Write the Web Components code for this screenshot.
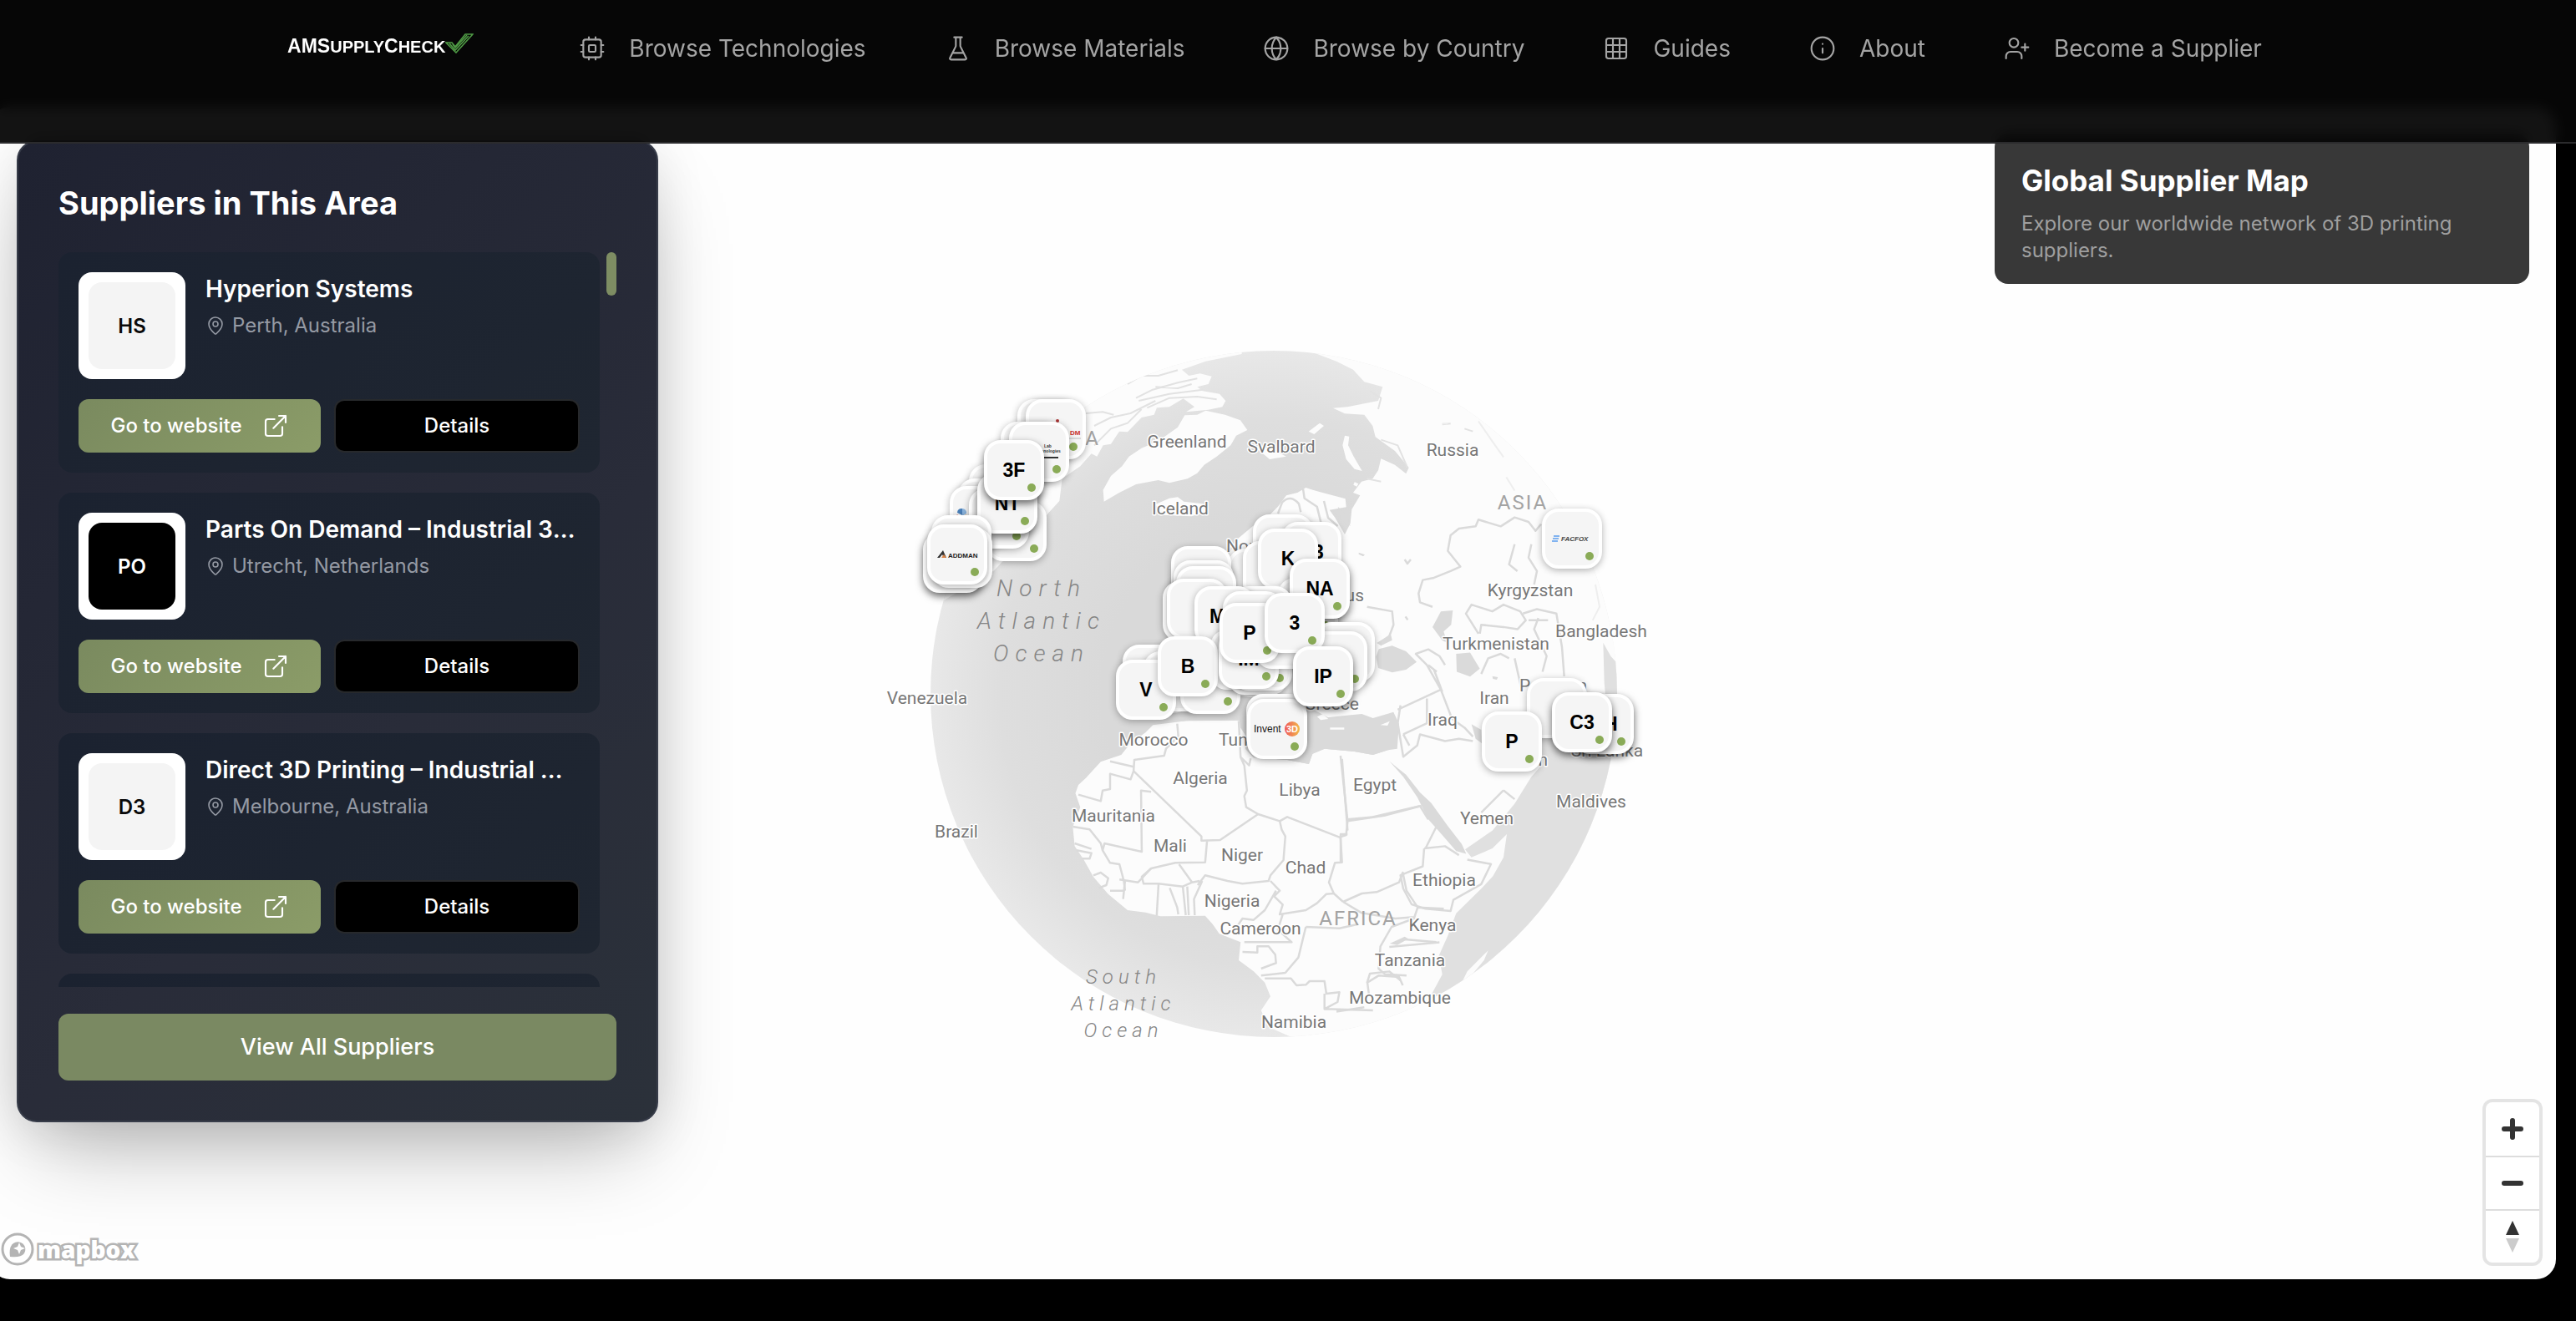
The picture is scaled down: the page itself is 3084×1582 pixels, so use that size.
<!DOCTYPE html>
<html lang="en">
<head>
<meta charset="utf-8">
<title>AMSupplyCheck – Global Supplier Map</title>
<style>
  html, body { margin: 0; height: 100%; background: #000; }
  body { display: flex; flex-direction: column; font-family: Inter, "Liberation Sans", sans-serif; overflow: hidden; }
</style>
</head>
<body>
<app-header></app-header>
<map-stage>
  <supplier-panel slot="left">
    <supplier-card name="Hyperion Systems" place="Perth, Australia" initials="HS"></supplier-card>
    <supplier-card name="Parts On Demand – Industrial 3D Printing" place="Utrecht, Netherlands" initials="PO" dark></supplier-card>
    <supplier-card name="Direct 3D Printing – Industrial Manufacturing" place="Melbourne, Australia" initials="D3"></supplier-card>
    <supplier-card></supplier-card>
  </supplier-panel>
  <info-card slot="right">
    <span slot="title">Global Supplier Map</span>
    Explore our worldwide network of 3D printing suppliers.
  </info-card>
  <map-controls slot="controls"></map-controls>
</map-stage>

<script>
const define = (name, html, after) => {
  const tpl = document.createElement('template');
  tpl.innerHTML = html;
  customElements.define(name, class extends HTMLElement {
    connectedCallback() {
      if (this.shadowRoot) return;
      this.attachShadow({ mode: 'open' }).append(tpl.content.cloneNode(true));
      if (after) after(this, this.shadowRoot);
    }
  });
};

/* ---------- icons ---------- */
const ICONS = {
  cpu: '<rect x="4" y="4" width="16" height="16" rx="2"/><rect x="9" y="9" width="6" height="6" rx="1"/><path d="M15 2v2M15 20v2M2 15h2M2 9h2M20 15h2M20 9h2M9 2v2M9 20v2"/>',
  flask: '<path d="M10 2v7.500a2 2 0 0 1-.2.9L4.700 20.550a1 1 0 0 0 .9 1.450h12.800a1 1 0 0 0 .9-1.450L14.200 10.400a2 2 0 0 1-.2-.9V2M8.500 2h7M7 16h10"/>',
  globe: '<circle cx="12" cy="12" r="10"/><path d="M12 2a14.500 14.500 0 0 0 0 20 14.500 14.500 0 0 0 0-20M2 12h20"/>',
  grid: '<rect x="3" y="3" width="18" height="18" rx="2"/><path d="M3 9h18M3 15h18M9 3v18M15 3v18"/>',
  info: '<circle cx="12" cy="12" r="10"/><path d="M12 16v-4M12 8h.01"/>',
  user: '<circle cx="9" cy="7" r="4"/><path d="M16 21v-2a4 4 0 0 0-4-4H6a4 4 0 0 0-4 4v2M19 8v6M22 11h-6"/>',
  pin: '<path d="M20 10c0 5-5.500 10.200-7.400 11.800a1 1 0 0 1-1.200 0C9.500 20.200 4 15 4 10a8 8 0 0 1 16 0"/><circle cx="12" cy="10" r="3"/>',
  external: '<path d="M15 3h6v6M10 14 21 3M18 13v6a2 2 0 0 1-2 2H5a2 2 0 0 1-2-2V8a2 2 0 0 1 2-2h6"/>'
};
define('ui-icon', `<style>
  :host { display: block; flex: none; width: var(--size, 32px); height: var(--size, 32px); }
  svg { display: block; width: 100%; height: 100%; fill: none; stroke: currentColor; stroke-width: 1.6; stroke-linecap: round; stroke-linejoin: round; }
</style><svg viewBox="0 0 24 24" aria-hidden="true"></svg>`,
  (el, root) => { root.querySelector('svg').innerHTML = ICONS[el.getAttribute('name')]; });

/* ---------- header ---------- */
define('nav-item', `<style>
  :host { display: block; }
  a { display: flex; align-items: center; gap: 28px; color: #a4a4a4; text-decoration: none; font-size: 28px; line-height: 40px; font-weight: 400; white-space: nowrap; }
</style><a href="#"><slot></slot></a>`,
  (el, root) => {
    const icon = document.createElement('ui-icon');
    icon.setAttribute('name', el.getAttribute('icon'));
    root.querySelector('a').prepend(icon);
  });

define('brand-logo', `<style>
  :host { display: block; padding-top: 2px; }
  a { display: flex; align-items: flex-end; color: #fff; text-decoration: none; font: bold 20px/24px "Liberation Sans", Arial, sans-serif; white-space: nowrap; }
  b, i { font-style: normal; font-size: 23px; }
  svg { width: 34px; height: 24px; margin-bottom: 4px; }
</style><a href="#"><span><b>AM</b><i>S</i>UPPLY<i>C</i>HECK</span>
<svg viewBox="0 0 34 24" fill="none" stroke="#4f9a45" stroke-width="1.6" aria-hidden="true">
<path d="M1 11h7l4 5L24 1h9L13 23z"/><path d="M5 12l7 8L28 3"/><path d="M9 13l3 4L26 2"/></svg></a>`);

define('app-header', `<style>
  :host { display: block; position: relative; z-index: 5; flex: none; margin-bottom: -44px; }
  header { box-sizing: border-box; height: 172px; padding: 38px 32px 0 0; border-bottom: 2px solid #2b2b2d; background: rgba(6,6,6,.95); backdrop-filter: blur(8px); display: flex; justify-content: center; align-items: flex-start; gap: 126px; }
  nav { display: flex; gap: 94px; }
</style><header>
<brand-logo></brand-logo>
<nav aria-label="Main">
<nav-item icon="cpu">Browse Technologies</nav-item>
<nav-item icon="flask">Browse Materials</nav-item>
<nav-item icon="globe">Browse by Country</nav-item>
<nav-item icon="grid">Guides</nav-item>
<nav-item icon="info">About</nav-item>
<nav-item icon="user">Become a Supplier</nav-item>
</nav></header>`);

/* ---------- supplier list ---------- */
define('supplier-card', `<style>
  :host { display: block; flex: none; box-sizing: border-box; height: 264px; padding: 24px; border-radius: 16px; background: linear-gradient(135deg, #1b2230, #1f2631); color: #fff; }
  .top { display: flex; gap: 24px; }
  .logo { box-sizing: border-box; width: 128px; height: 128px; padding: 12px; border-radius: 16px; background: #fff; flex: none; }
  .logo span { display: flex; height: 100%; align-items: center; justify-content: center; border-radius: 16px; background: #f4f4f4; color: #0a0a0a; font-size: 24px; font-weight: 600; }
  :host([dark]) .logo span { background: #000; color: #fff; }
  .text { min-width: 0; }
  h3 { margin: 0; font-size: 28px; line-height: 40px; font-weight: 600; white-space: nowrap; overflow: hidden; text-overflow: ellipsis; }
  p { display: flex; align-items: center; gap: 8px; margin: 4px 0 0; font-size: 24px; line-height: 40px; color: #959aa4; --size: 24px; }
  .actions { display: flex; gap: 16px; margin-top: 24px; }
  a, button { box-sizing: border-box; flex: 1 1 0; height: 64px; border-radius: 12px; display: flex; align-items: center; justify-content: center; gap: 24px; font: 500 24px/32px Inter, sans-serif; color: #fff; text-decoration: none; }
  a { background: linear-gradient(135deg, #7a8a5f, #8b9c68); }
  button { background: #000; border: 2px solid #27292c; padding: 0; }
</style>
<div class="top"><div class="logo"><span></span></div><div class="text"><h3></h3><p><ui-icon name="pin"></ui-icon><span></span></p></div></div>
<div class="actions"><a href="#">Go to website<ui-icon name="external"></ui-icon></a><button type="button">Details</button></div>`,
  (el, root) => {
    if (!el.hasAttribute('name')) { root.querySelectorAll('div').forEach(d => d.remove()); return; }
    root.querySelector('.logo span').textContent = el.getAttribute('initials');
    root.querySelector('h3').textContent = el.getAttribute('name');
    root.querySelector('p span').textContent = el.getAttribute('place');
  });

define('supplier-panel', `<style>
  :host { display: block; }
  section { box-sizing: border-box; width: 768px; padding: 48px; display: flex; flex-direction: column; gap: 32px; border: 2px solid #373c49; border-radius: 24px; background: linear-gradient(135deg, #1f2231, #292c39 60%, #2b313a); box-shadow: 0 50px 100px -24px rgba(0,0,0,.28), 0 10px 60px rgba(0,0,0,.1); }
  h2 { margin: 0; color: #fff; font-size: 38px; line-height: 50px; padding-bottom: 2px; font-weight: 700; white-space: nowrap; }
  .scroll { display: flex; gap: 8px; }
  .list { flex: 1; min-width: 0; height: 880px; overflow: hidden; display: flex; flex-direction: column; gap: 24px; }
  .thumb { width: 12px; height: 52px; border-radius: 6px; background: #7e8d63; }
  button { height: 80px; border: 0; border-radius: 12px; background: #7a8962; color: #fff; font: 500 27px/40px Inter, sans-serif; }
</style><section><h2>Suppliers in This Area</h2>
<div class="scroll"><div class="list"><slot></slot></div><div class="thumb"></div></div>
<button type="button">View All Suppliers</button></section>`);

define('info-card', `<style>
  :host { display: block; }
  section { box-sizing: border-box; width: 640px; padding: 28px 32px 24px; border-radius: 16px; background: #383838; }
  h2 { margin: 0 0 8px; color: #fff; font-size: 35px; line-height: 56px; font-weight: 700; }
  p { margin: 0; color: #9f9f9f; font-size: 24px; line-height: 32px; }
</style><section><h2><slot name="title"></slot></h2><p><slot></slot></p></section>`);

define('map-controls', `<style>
  :host { display: block; }
  div { width: 64px; border-radius: 8px; background: #fff; box-shadow: 0 0 0 4px rgba(0,0,0,.1); }
  button { display: flex; align-items: center; justify-content: center; width: 64px; height: 64px; padding: 0; border: 0; background: none; }
  button + button { border-top: 2px solid #ddd; }
  svg { width: 40px; height: 40px; }
</style><div>
<button type="button" aria-label="Zoom in"><svg viewBox="0 0 40 40"><path d="M20 10v20M10 20h20" stroke="#333" stroke-width="6" stroke-linecap="round"/></svg></button>
<button type="button" aria-label="Zoom out"><svg viewBox="0 0 40 40"><path d="M10 20h20" stroke="#333" stroke-width="6" stroke-linecap="round"/></svg></button>
<button type="button" aria-label="Reset bearing to north"><svg viewBox="0 0 40 40"><path d="M12 18 20 1l8 17z" fill="#333"/><path d="M12 22l8 17 8-17z" fill="#ccc"/></svg></button>
</div>`);

/* ---------- pins ---------- */
define('map-pin', `<style>
  :host { display: block; position: absolute; }
  button { box-sizing: border-box; position: relative; display: flex; align-items: center; justify-content: center; width: 72px; height: 72px; padding: 0; border: 4px solid #fff; border-radius: 20px; background: #f5f5f5; box-shadow: 0 2px 8px rgba(0,0,0,.3); color: #000; font: bold 23px/24px "Liberation Sans", Arial, sans-serif; white-space: nowrap; }
  :host([strong]) button { box-shadow: 0 4px 10px rgba(0,0,0,.6); }
  i { position: absolute; right: 6px; bottom: 6px; width: 10px; height: 10px; border-radius: 5px; background: #8aab57; }
</style><button type="button"><slot></slot><i></i></button>`);

/* ---------- globe ---------- */
const LABELS = [
  ['Greenland',1421,536],['Svalbard',1534,542],['Iceland',1413,616],['Russia',1739,546],['Norway',1468,661,'start'],
  ['Belarus',1633,720,'end'],['Kyrgyzstan',1832,714],['Turkmenistan',1791,778],['Bangladesh',1917,763],['Iran',1789,843],
  ['Iraq',1727,869],['Pakistan',1819,828,'start'],['Yemen',1780,987],['Maldives',1905,967],['Sri Lanka',1924,906],
  ['Oman',1853,917,'end'],['Greece',1594,850],['Morocco',1381,893],['Tunisia',1459,893,'start'],['Algeria',1437,939],
  ['Libya',1556,953],['Egypt',1646,947],['Mauritania',1333,984],['Mali',1401,1020],['Niger',1487,1031],['Chad',1563,1046],
  ['Nigeria',1475,1086],['Cameroon',1509,1119],['Ethiopia',1729,1061],['Kenya',1715,1115],['Tanzania',1688,1157],
  ['Mozambique',1676,1202],['Namibia',1549,1231],['Venezuela',1110,843],['Brazil',1145,1003]
];
const ADDMAN = '<svg width="50" height="12" viewBox="0 0 50 12"><path d="M1 10 8 1l4 9H9L7 6l-3 4z" fill="#333"/><path d="M6 10l3-4 3 4z" fill="#d98246"/><text x="14" y="10" font-size="8" font-weight="bold" fill="#222">ADDMAN</text></svg>';
const FACFOX = '<svg width="50" height="10" viewBox="0 0 50 10"><path d="M3 2h7M2 5h7M1 8h7" stroke="#5b9dee" stroke-width="1.500"/><text x="12" y="8" font-size="8" font-style="italic" font-weight="bold" fill="#444">FACFOX</text></svg>';
const INVENT = '<svg width="56" height="20" viewBox="0 0 56 20"><defs><linearGradient id="iv"><stop stop-color="#ef5a5a"/><stop offset="1" stop-color="#f2b84b"/></linearGradient></defs><text x="0" y="14" font-size="12" font-weight="normal" fill="#111">Invent</text><circle cx="46" cy="10" r="9" fill="url(#iv)"/><text x="39" y="14" font-size="11" fill="#fff">3D</text></svg>';
const BLOB = '<svg width="62" height="20" viewBox="0 0 62 20"><path d="M4 6a5 5 0 0 1 6-5v8z" fill="#4a7fb8"/><path d="M10 1a5 5 0 0 1 5 6l-5 3z" fill="#8bb4dd"/><path d="M3 8l7 3v4z" fill="#d9534f"/><path d="M10 11l5-3-3 7z" fill="#e39a3b"/><path d="M8 14h4l-2 3z" fill="#5ca45c"/></svg>';
const DM = '<svg width="64" height="30" viewBox="0 0 64 30"><circle cx="34" cy="5" r="2" fill="#a33"/><text x="49" y="22" font-size="8" fill="#c9302c">DM</text><path d="M48 26h14" stroke="#bbb"/></svg>';
const LAB = '<svg width="64" height="28" viewBox="0 0 64 28"><g font-size="5" fill="#333"><text x="38" y="9">Lab</text><text x="26" y="15">Technologies</text></g><path d="M38 21h17" stroke="#333" stroke-width="2"/></svg>';
const PINS = [
  [1218,478,''],[1228,478,DM],[1198,505,''],[1208,505,LAB],[1160,556,''],[1147,573,''],[1181,600,''],[1137,582,BLOB],
  [1160,585,''],[1170,567,'NT',1],[1178,527,'3F',1],[1115,617,''],[1105,638,'',1],[1116,632,''],[1110,628,ADDMAN],
  [1500,616,''],[1534,625,'A3'],[1470,657,''],[1488,648,''],[1402,654,''],[1405,671,''],[1408,678,''],[1421,718,''],
  [1392,696,''],[1397,693,''],[1506,633,'K'],[1530,692,''],[1544,669,'NA',1],[1475,702,''],[1430,702,'MA'],
  [1344,772,''],[1369,780,''],[1413,783,''],[1336,790,'V'],[1449,754,''],[1386,762,'B'],[1470,760,''],[1475,755,''],
  [1459,753,'IM'],[1503,729,''],[1464,708,''],[1460,722,'P'],[1574,745,''],[1565,756,''],[1514,710,'3'],
  [1492,831,''],[1493,837,INVENT],[1548,774,'IP',1],
  [1846,609,FACFOX],[1828,812,''],[1774,852,'P'],[1884,831,'AH',1],[1858,829,'C3',1]
];

define('globe-map', `<style>
  :host { display: block; position: relative; flex: none; width: 1000px; height: 860px; }
  .world { display: block; width: 1000px; height: 860px; overflow: visible; }
  .land { fill: #fcfcfc; } .sea { fill: #dadada; }
  .line { fill: none; stroke: #dadada; stroke-width: 2.500; stroke-linejoin: round; }
  .line *, .fine * { vector-effect: non-scaling-stroke; }
  .fine { fill: none; stroke: #e2e2e2; stroke-width: 2; stroke-linejoin: round; }
  text { font-family: Roboto, sans-serif; fill: #777; paint-order: stroke; stroke: #fff; stroke-width: 3px; stroke-linejoin: round; font-size: 21px; text-anchor: middle; }
  .region text { font-size: 24px; letter-spacing: 2px; fill: #a3a3a3; stroke: none; }
  .ocean text { font-size: 28px; font-style: italic; font-weight: 300; letter-spacing: 8px; fill: #858585; stroke: none; }
  .ocean .s { font-size: 24px; letter-spacing: 6px; }
</style>
<svg class="world" viewBox="1024 400 1000 860" role="img" aria-label="Globe">
<defs>
  <radialGradient id="sea" gradientUnits="userSpaceOnUse" cx="1525" cy="830" r="411"><stop offset=".5" stop-color="#d9d9d9"/><stop offset=".8" stop-color="#dedede"/><stop offset="1" stop-color="#e8e8e8"/></radialGradient>
  <clipPath id="disc"><circle cx="1525" cy="831" r="411"/></clipPath>
</defs>
<circle cx="1525" cy="831" r="411" fill="url(#sea)"/>
<g clip-path="url(#disc)">
  <g transform="translate(1300 400) scale(.333333)">
    <path class="land" d="M-900 960H-515L-330 850-150 660-95 600-85 520-20 475 20 430 40 440 62 400 90 395 120 350 150 352 200 300 245 290 255 265 300 262 350 232 390 262 360 280 440 272 490 262 502 240 480 215 420 205 400 190 440 180 452 152 410 142 370 150 345 128 430 98 560 72V-40H-900z"/>
    <path class="land" d="M65 602 62 560 90 510 130 475 155 440 200 410 260 385 330 335 355 292 400 290 430 275 500 290 555 310 580 345 540 365 520 400 470 440 425 470 400 500 365 520 300 535 260 525 180 540 120 570z"/>
    <path class="land" d="M250 612 300 590 330 586 352 602 420 610 430 640 380 655 270 650zM600 400l60 10 60 30-60 10zM800 350l40-30 15 10-35 30z"/>
    <path class="land" d="M800 60 900 98 960 128 1000 172 1066 190 1050 240 1000 250 940 262 888 266 930 286 1000 290 1030 330 1040 370 1110 420 1160 480 1150 502 1110 470 1060 448 1050 490 1030 520 990 530 960 570 985 580 955 630 950 680 930 720 895 660 875 632 935 622 932 592 850 570 815 560 790 552 760 570 720 580 690 620 660 650 600 690 540 740 510 800 620 900 500 1000 450 1120 250 1180 200 1380 330 1360 560 1300 800 1340 1100 1500 2200 1500V-100z"/>
    <path class="land" d="M930 365 922 400 935 450 965 485 992 492 962 440 942 400 946 368zM965 532l14 6-6 10-12-6z"/>
    <path class="sea" d="M1042 1160 1052 1132 1100 1120 1150 1140 1188 1178 1150 1206 1100 1216 1050 1200zM1045 1110l50-32 5 22-40 20zM980 785l22 8-6 6-16-8zM905 620l30 30 15 40-35-30z"/>
    <g class="fine">
      <path d="M180 230 240 200 330 175 400 160M190 240 300 215 420 200M30 330 90 300 160 285 250 240M150 180 200 150 260 150 330 130M0 285 60 280 100 290M30 400 90 340 150 320 200 270M220 265 300 230 400 225 470 235M250 190 330 195 380 180M1060 380 1120 400 1155 480M1020 205 1060 230 1050 270M1010 520 1060 530"/>
      <path d="M1280 325 1310 322M1360 340 1390 350"/>
    </g>
    <g class="line"><path d="M690 645 705 605Q735 575 765 610L772 640M780 556 785 590 830 620 845 680M855 600 870 660 905 690M1145 810l10 15 12-15M1148 1015l8 12"/></g>
  </g>
  <g transform="translate(1050 800) scale(.4464 .333333)">
    <path class="land" d="M2200-100H1600L1400 180V290L1370 295 1330 312 1280 300 1200 290 1168 308 1158 345 1100 330 1010 322 988 290 992 250 975 215 972 188 900 185 830 190 740 205 720 232 680 270 655 312 600 337 560 395 540 420 532 450 545 500 525 570 530 640 555 690 580 750 620 812 672 870 720 878 760 892 880 890 900 920 918 955 975 985 970 1050 1010 1090 1040 1130 1055 1180 1030 1230 1050 1290 1110 1325 1200 1500H2200z"/>
    <path class="sea" d="M740 200 790 170 990 185 1000 140 1150 140 1190 180 1260 170 1300 165 1330 180 1385 158 1400 200 1395 290 1370 295 1330 312 1280 300 1200 290 1168 308 1158 345 1100 330 1010 322 988 290 992 250 972 188 830 190z"/>
    <path class="land" d="M1215 214h38v7h-38zM1350 205l25-14-6 16zM1180 175l16-10 14 18-20 4z"/>
    <g class="line">
      <path d="M805 200 808 245 775 290 770 315 690 330 688 370M625 335 688 355M540 455 600 478 605 440 625 435V380L680 400 688 370M688 370 870 605V620L920 618 1022 525 990 500 985 460 992 440 985 350 975 320 970 190M975 320 998 350 1002 325"/>
      <path d="M735 445 708 440 710 660 610 630 605 655M525 570 570 580 600 630 605 655 625 700 650 705 662 765 665 800M530 630 575 650M535 655 575 665 570 685H550M650 760 700 770 735 720 800 700 880 698 885 622"/>
      <path d="M735 720 710 750 715 775 755 775 820 785 845 770 810 705M845 770 865 765M860 780 880 745 940 765 980 775 1050 765 1055 745 1090 690 1095 605 1085 580 1080 550 1022 525"/>
      <path d="M1080 550 1100 535 1240 608 1258 600 1262 550 1243 315M1262 550 1360 530 1460 495M1243 608 1247 698 1228 700 1212 770 1225 810 1250 840"/>
      <path d="M1055 765 1080 800 1065 820 1088 850 1080 885 1150 870 1180 845 1205 812 1225 810M1070 800 1040 870 1010 905 980 900 965 930M755 775 750 890M785 790 805 860 808 885M820 785 828 888M832 785 836 888M872 765 850 830 852 888"/>
      <path d="M1250 840 1300 810 1340 805 1400 770 1410 735 1420 800 1450 860 1440 900 1380 930 1350 1000 1345 1080 1362 1100 1420 1105M1250 840 1300 880 1390 900 1440 895M1450 860 1520 865M1088 885 1075 940 1112 985 985 985"/>
      <path d="M1150 930 1130 1040 1095 1095 1030 1105M1150 930 1240 935 1290 920M980 1020 1020 1022V1000H1050L1068 1030 1070 1060 1030 1080M1040 1115H1110L1125 1140 1150 1138 1160 1125H1200L1205 1170 1240 1165 1235 1200 1200 1225V1170M1200 1225 1330 1230M1415 975 1500 985M1320 1180 1315 1130 1345 1105 1400 1110 1410 1140"/>
      <path d="M580 745 600 735 620 755 615 780 595 790M625 800 660 800M665 765 660 830"/>
    </g>
    <path class="sea" d="M1375 990l40-25 10 8-30 22z"/>
  </g>
  <g transform="translate(1600 400) scale(.333333 .5357)">
    <path class="sea" d="M735 900H860L970 930 972 850 962 780 958 690 985 720 1100 800V1000L900 1400 500 1600 300 1520 340 1478 380 1432 368 1390 400 1345 430 1295 520 1240 562 1212 600 1170 612 1118 560 1150 485 1170 462 1152 560 1110 640 1050 700 990 740 962z" style="fill:#e0e0e0"/>
    <path class="land" d="M450 1450 470 1425 545 1378 530 1400 490 1430zM970 930l30 0-10 20z"/>
    <path class="sea" d="M190 955 215 968 250 985 300 1025 340 1048 400 1100 450 1140 466 1162 430 1156 380 1120 330 1085 290 1035 240 990zM485 872 520 885 522 915 500 905zM345 655 375 620 418 618 412 650 385 665 398 690 380 685zM430 715 480 712 515 748 480 766 432 755zM560 765l20 2-4 6-14-2z"/>
    <g class="line">
      <path d="M345 610 300 600 295 580 310 550 350 545 410 530 445 520 400 485 410 450 440 435 500 430 510 415 590 430 640 410 690 420 715 440 735 425M640 470 620 515 650 530M700 470 690 500 720 530 710 560"/>
      <path d="M510 670 465 625 485 605 560 620 600 605 660 620 680 640 650 660 600 655 520 650 515 670M640 725 665 795M520 760 545 725 590 715 620 725M740 755 755 720 710 660 725 635M670 625 720 615 790 625 810 700 818 765M690 640 760 640"/>
      <path d="M220 840 375 795 325 740 285 715 330 705 370 720 390 740M330 740 360 755M375 795 415 860 460 880 490 900M325 815V870L240 895M230 830 220 870 240 945 290 920 300 895 390 910 440 905 490 910M240 895 262 920M350 750 380 800"/>
      <path d="M110 610 200 620 205 650 190 675M20 950 40 1110M40 1085 130 1080 300 1055M40 1118H15V1180M315 1150 390 1145 440 1165M315 1150 310 1190 230 1210 240 1240 270 1275 320 1285 410 1290 420 1265 520 1230 555 1185 470 1175M600 1020 640 1040M600 1020 520 1070M320 1150 360 1100 400 1110"/>
      <path d="M190 1370 370 1360M300 1055 330 1085M110 1450 120 1430 190 1425 230 1445M0 1515 100 1505"/>
    </g>
    <g class="fine"><path d="M510 195 560 240 600 275M610 320 640 350M930 560 945 610 920 640M380 200h20" style="stroke:#eee"/></g>
  </g>
</g>
<g class="region"><text x="1317" y="533" style="text-anchor:end">AMERICA</text><text x="1823" y="610">ASIA</text><text x="1626" y="1108">AFRICA</text></g>
<g class="ocean"><text x="1247" y="714">North</text><text x="1247" y="753">Atlantic</text><text x="1247" y="792">Ocean</text>
<text class="s" x="1345" y="1178">South</text><text class="s" x="1345" y="1210">Atlantic</text><text class="s" x="1345" y="1242">Ocean</text></g>
<g class="names"></g>
</svg>`, (el, root) => {
  root.querySelector('.names').innerHTML = LABELS.map(([t, x, y, a]) => `<text x="${x}" y="${y}"${a ? ` style="text-anchor:${a}"` : ''}>${t}</text>`).join('');
  root.append(...PINS.map(([x, y, html, strong]) => {
    const pin = document.createElement('map-pin');
    pin.style.left = x - 1024 + 'px';
    pin.style.top = y - 400 + 'px';
    if (strong) pin.setAttribute('strong', '');
    pin.innerHTML = html;
    pin.querySelectorAll('svg').forEach(s => { s.style.overflow = 'visible'; s.style.flex = 'none'; });
    pin.querySelectorAll('text').forEach(t => {
      const size = t.getAttribute('font-size') || 5;
      t.setAttribute('style', `stroke:none;text-anchor:start;font-family:"Liberation Sans",sans-serif;fill:${t.getAttribute('fill') || '#333'};font-size:${size}px`);
    });
    return pin;
  }));
});

define('mapbox-logo', `<style>
  :host { display: block; }
  a { display: flex; align-items: center; gap: 4px; text-decoration: none; }
  svg { width: 40px; height: 40px; }
  span { font: 800 28px/40px "Open Sans", sans-serif; color: #fff; -webkit-text-stroke: 5px #b4b4b4; paint-order: stroke fill; }
</style><a href="#" aria-label="Mapbox homepage"><svg viewBox="0 0 40 40"><circle cx="20" cy="20" r="18" fill="#fff" stroke="#b4b4b4" stroke-width="3"/><path d="M11 29c-1-8 0-13 4-16a9 9 0 0 1 13 12c-3 4-9 5-17 4z" fill="#b4b4b4"/><path d="M22 12l2 5 5 2-5 2-2 5-2-5-5-2 5-2z" fill="#fff"/></svg><span>mapbox</span></a>`);

define('map-stage', `<style>
  :host { display: block; flex: 1; min-height: 0; margin: 0 24px 50px -12px; }
  main { box-sizing: border-box; position: relative; height: 100%; overflow: hidden; border-radius: 24px; background: #fefefe; display: flex; align-items: center; justify-content: center; }
  .left, .right, .controls, .logo { position: absolute; }
  .left { left: 32px; top: 40px; }
  .right { right: 32px; top: 32px; }
  .controls { right: 20px; bottom: 20px; }
  .logo { left: 13px; bottom: 16px; }
</style><main><globe-map></globe-map>
<div class="left"><slot name="left"></slot></div>
<div class="right"><slot name="right"></slot></div>
<div class="logo"><mapbox-logo></mapbox-logo></div>
<div class="controls"><slot name="controls"></slot></div></main>`);
</script>
</body>
</html>
